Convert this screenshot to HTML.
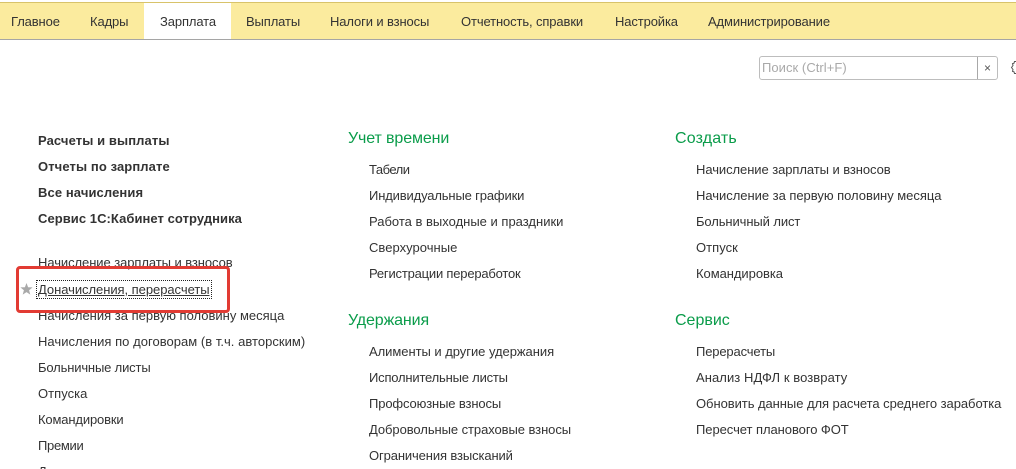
<!DOCTYPE html>
<html lang="ru"><head><meta charset="utf-8"><title>Зарплата</title>
<style>
html,body{margin:0;padding:0;background:#fff}
#p{position:relative;width:1016px;height:469px;overflow:hidden;font-family:"Liberation Sans",Arial,sans-serif;color:#333;font-size:13px;background:#fff}
#p div,#p span.t{position:absolute;white-space:nowrap}
.t{line-height:16px;letter-spacing:.03px}
.n{letter-spacing:-.12px}
.b{font-weight:bold;letter-spacing:.1px}
.h{font-size:16px;color:#0a9c4a;line-height:20px;letter-spacing:-.12px}
</style></head><body><div id="p">
<div style="left:0;top:0;width:1016px;height:2px;background:#fff"></div>
<div style="left:0;top:2px;width:1016px;height:1px;background:#d8c36a"></div>
<div style="left:0;top:3px;width:1016px;height:36px;background:#fbeb9e"></div>
<div style="left:0;top:39px;width:1016px;height:1px;background:#a5a5a5"></div>
<div style="left:144px;top:3px;width:87px;height:36px;background:#fff"></div>
<span class="t n" style="left:11px;top:14px">Главное</span>
<span class="t n" style="left:90px;top:14px">Кадры</span>
<span class="t n" style="left:160px;top:14px">Зарплата</span>
<span class="t n" style="left:246px;top:14px">Выплаты</span>
<span class="t n" style="left:330px;top:14px">Налоги и взносы</span>
<span class="t n" style="left:461px;top:14px">Отчетность, справки</span>
<span class="t n" style="left:615px;top:14px">Настройка</span>
<span class="t n" style="left:708px;top:14px">Администрирование</span>

<div style="left:759px;top:56px;width:237px;height:22px;border:1px solid #bdbdbd;border-radius:3px;background:#fff"></div>
<div style="left:977px;top:57px;width:1px;height:22px;background:#a8a8a8"></div>
<span class="t" style="left:762px;top:60px;color:#a9a9a9;letter-spacing:.05px">Поиск (Ctrl+F)</span>
<span class="t" style="left:984px;top:60px;font-size:12px;color:#555;letter-spacing:0">×</span>
<svg style="position:absolute;left:1010px;top:60px" width="6" height="15" viewBox="0 0 6 15"><path d="M6 1.5H4.5L4 3.2L2.5 3.6L3 5.5L1.5 7.5L3 9.5L2.5 11.4L4 11.8L4.5 13.5H6" fill="none" stroke="#555" stroke-width="1"/></svg>

<span class="t b" style="left:38px;top:133px">Расчеты и выплаты</span>
<span class="t b" style="left:38px;top:159px">Отчеты по зарплате</span>
<span class="t b" style="left:38px;top:185px">Все начисления</span>
<span class="t b" style="left:38px;top:211px;letter-spacing:.06px">Сервис 1С:Кабинет сотрудника</span>
<span class="t" style="left:38px;top:255px;letter-spacing:-.07px">Начисление зарплаты и взносов</span>
<span class="t" style="left:38px;top:282px;text-decoration:underline;letter-spacing:-.05px">Доначисления, перерасчеты</span>
<div style="left:36px;top:280px;width:174px;height:17px;border:1px dotted #222"></div>
<svg style="position:absolute;left:20px;top:283px" width="13" height="12" viewBox="0 0 13 12"><path d="M6.5 0L8.1 4.2L12.6 4.4L9.1 7.2L10.3 11.6L6.5 9.1L2.7 11.6L3.9 7.2L.4 4.4L4.9 4.2Z" fill="#a9a9a9"/></svg>
<span class="t" style="left:38px;top:308px;letter-spacing:0">Начисления за первую половину месяца</span>
<span class="t" style="left:38px;top:334px">Начисления по договорам (в т.ч. авторским)</span>
<span class="t" style="left:38px;top:360px;letter-spacing:-.16px">Больничные листы</span>
<span class="t" style="left:38px;top:386px">Отпуска</span>
<span class="t" style="left:38px;top:412px;letter-spacing:-.15px">Командировки</span>
<span class="t" style="left:38px;top:438px;letter-spacing:-.3px">Премии</span>
<span class="t" style="left:38px;top:464px">Дивиденды</span>
<div style="left:16px;top:266px;width:208px;height:41px;border:3px solid #e23b33;border-radius:4px"></div>

<span class="t h" style="left:348px;top:129px">Учет времени</span>
<span class="t" style="left:369px;top:162px;letter-spacing:-.5px">Табели</span>
<span class="t" style="left:369px;top:188px;letter-spacing:-.15px">Индивидуальные графики</span>
<span class="t" style="left:369px;top:214px;letter-spacing:0">Работа в выходные и праздники</span>
<span class="t" style="left:369px;top:240px">Сверхурочные</span>
<span class="t" style="left:369px;top:266px;letter-spacing:-.2px">Регистрации переработок</span>
<span class="t h" style="left:348px;top:311px">Удержания</span>
<span class="t" style="left:369px;top:344px;letter-spacing:-.04px">Алименты и другие удержания</span>
<span class="t" style="left:369px;top:370px;letter-spacing:-.2px">Исполнительные листы</span>
<span class="t" style="left:369px;top:396px;letter-spacing:-.13px">Профсоюзные взносы</span>
<span class="t" style="left:369px;top:422px;letter-spacing:-.07px">Добровольные страховые взносы</span>
<span class="t" style="left:369px;top:448px;letter-spacing:-.12px">Ограничения взысканий</span>

<span class="t h" style="left:675px;top:129px;letter-spacing:.15px">Создать</span>
<span class="t" style="left:696px;top:162px;letter-spacing:-.07px">Начисление зарплаты и взносов</span>
<span class="t" style="left:696px;top:188px;letter-spacing:-.03px">Начисление за первую половину месяца</span>
<span class="t" style="left:696px;top:214px;letter-spacing:-.1px">Больничный лист</span>
<span class="t" style="left:696px;top:240px">Отпуск</span>
<span class="t" style="left:696px;top:266px;letter-spacing:-.05px">Командировка</span>
<span class="t h" style="left:675px;top:311px;letter-spacing:0">Сервис</span>
<span class="t" style="left:696px;top:344px;letter-spacing:-.15px">Перерасчеты</span>
<span class="t" style="left:696px;top:370px;letter-spacing:.07px">Анализ НДФЛ к возврату</span>
<span class="t" style="left:696px;top:396px;letter-spacing:-.055px">Обновить данные для расчета среднего заработка</span>
<span class="t" style="left:696px;top:422px;letter-spacing:-.06px">Пересчет планового ФОТ</span>
</div></body></html>
